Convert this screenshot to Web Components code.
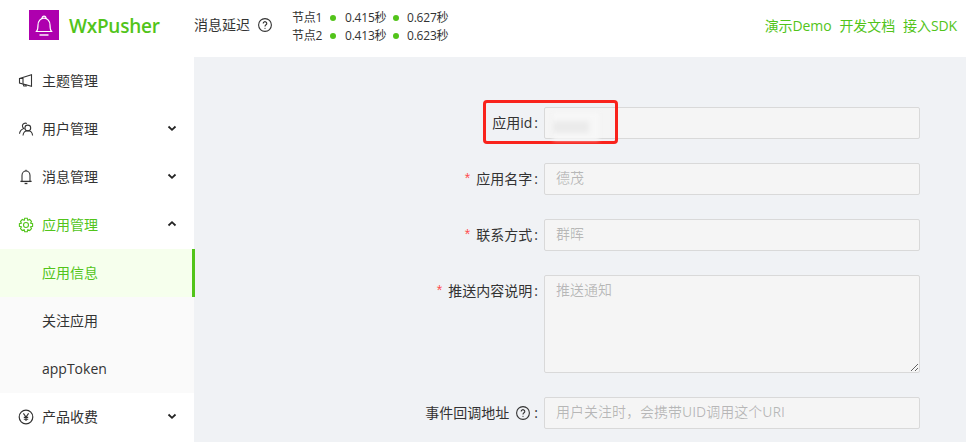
<!DOCTYPE html>
<html lang="zh">
<head>
<meta charset="utf-8">
<title>WxPusher</title>
<style>
    html, body { margin: 0; height: 100%; overflow: hidden; background: #f0f2f5; }
    body {
        font-family: "Open Sans", "Noto Sans CJK SC", sans-serif;
        font-size: 14px;
        color: rgba(0,0,0,.85);
    }
</style>
</head>
<body>
<wx-app></wx-app>

<script>
const GREEN = '#52c41a';

const ICONS = {
    notify: '<path d="M1.500 5.500 13.500 1.800v11.400L1.500 10z"/><path d="M1.500 5.500h3.500V10"/><path d="M5 10.400l.8 2.600h2.400l-.5-1.700"/>',
    user: '<circle cx="9.800" cy="7" r="2.900"/><path d="M5 14.500c.3-2.800 2.300-4.700 4.800-4.700s4.500 1.900 4.800 4.700"/><path d="M8.800 2.500A3 3 0 0 0 4.400 4.800c0 1.100.5 2 1.300 2.600C3.500 8.200 1.800 10.200 1.500 12.800"/>',
    bell: '<path d="M4 12.400V6.400a4 4.400 0 0 1 8 0v6"/><path d="M2.400 12.400h11.200" stroke-width="1.300"/><path d="M6.600 14.500h2.800" stroke-width="1.300"/><path d="M8 .8V2"/>',
    gear: '<path d="M6.700 1.300h2.600l.5 2 1.900-.8 1.800 1.800-.9 1.800 2 .6v2.600l-2 .6.9 1.800-1.800 1.800-1.900-.8-.5 2H6.700l-.5-2-1.900.8-1.800-1.800.9-1.800-2-.6V6.700l2-.6-.9-1.800 1.800-1.800 1.900.8z"/><circle cx="8" cy="8" r="2.500"/>',
    yuan: '<circle cx="8" cy="8" r="6.800" stroke-width="1.200"/><path d="M5.400 4.400 8 8l2.600-3.600M8 8v4M5.800 8.400h4.400M5.800 10.200h4.400"/>'
};

class WxHelpIcon extends HTMLElement {
    constructor() {
        super();
        this.attachShadow({ mode: 'open' });
        this.shadowRoot.innerHTML = `
            <style>
                :host { display: inline-flex; width: 14px; height: 14px; }
                svg { width: 14px; height: 14px; }
            </style>
            <svg viewBox="0 0 14 14" fill="none" stroke="#333" aria-hidden="true">
                <circle cx="7" cy="7" r="6.400" stroke-width="1.100"/>
                <path d="M5.200 5.400a1.800 1.700 0 1 1 2.800 1.400c-.7.500-1 .8-1 1.600" stroke-width="1.100"/>
                <circle cx="7" cy="10.300" r=".6" fill="#333" stroke="none"/>
            </svg>`;
    }
}

class WxLogo extends HTMLElement {
    constructor() {
        super();
        this.attachShadow({ mode: 'open' });
        this.shadowRoot.innerHTML = `
            <style>
                :host { display: flex; align-items: center; gap: 10px; }
                .mark { width: 30px; height: 30px; background: #ae00ae; display: block; }
                .name { font-size: 19px; font-weight: 600; letter-spacing: -.25px; color: ${GREEN}; line-height: 30px; width: 90px; white-space: nowrap; margin-top: 2px; }
            </style>
            <svg class="mark" viewBox="0 0 30 30" fill="none" stroke="#fff" stroke-width="1.200">
                <path d="M7.500 21.500c1.300-1.500 1.500-3 1.500-6.500 0-3.800 2.600-6.800 6-6.800s6 3 6 6.800c0 3.500.2 5 1.500 6.500z"/>
                <path d="M13 8.500c0-3.300 4-3.300 4 0"/>
                <path d="M10.500 25h9" stroke-width="1.400"/>
            </svg>
            <span class="name">WxPusher</span>`;
    }
}

class WxDelay extends HTMLElement {
    constructor() {
        super();
        this.attachShadow({ mode: 'open' });
        const rows = [['节点1', '0.415秒', '0.627秒'], ['节点2', '0.413秒', '0.623秒']];
        this.shadowRoot.innerHTML = `
            <style>
                :host { display: flex; align-items: center; color: #333; }
                .title { font-size: 14px; margin-right: 8px; padding-bottom: 2px; white-space: nowrap; }
                .nodes { margin: 4px 0 0 20px; display: grid; grid-template-columns: 29px 24px 40px 22px auto; font-size: 12px; line-height: 18px; white-space: nowrap; letter-spacing: -.2px; }
                .dot { width: 6px; height: 6px; border-radius: 50%; background: ${GREEN}; margin-top: 6px; justify-self: center; }
            </style>
            <span class="title">消息延迟</span>
            <wx-help-icon></wx-help-icon>
            <div class="nodes">
                ${rows.map(r => `<span>${r[0]}</span><i class="dot"></i><span>${r[1]}</span><i class="dot"></i><span>${r[2]}</span>`).join('')}
            </div>`;
    }
}

class WxHeader extends HTMLElement {
    constructor() {
        super();
        this.attachShadow({ mode: 'open' });
        this.shadowRoot.innerHTML = `
            <style>
                :host { display: flex; align-items: center; height: 57px; padding: 0 9px 7px 29px; box-sizing: border-box; background: #fff; }
                wx-logo { margin-right: 35px; }
                nav { margin-left: auto; display: flex; gap: 8px; color: ${GREEN}; font-size: 14px; white-space: nowrap; letter-spacing: -.1px; }
            </style>
            <wx-logo></wx-logo>
            <wx-delay></wx-delay>
            <nav><span>演示Demo</span><span>开发文档</span><span>接入SDK</span></nav>`;
    }
}

class WxMenuItem extends HTMLElement {
    constructor() {
        super();
        this.attachShadow({ mode: 'open' });
        const icon = this.getAttribute('icon');
        const arrow = this.getAttribute('arrow');
        this.shadowRoot.innerHTML = `
            <style>
                :host { display: flex; align-items: center; height: 48px; padding: 0 16px 0 18px; box-sizing: border-box; position: relative; color: #333; white-space: nowrap; }
                :host([open]) { color: ${GREEN}; }
                :host([sub]) { padding-left: 42px; background: #fafafa; }
                :host([selected]) { background: #f6ffed; color: ${GREEN}; }
                :host([selected])::after { content: ""; position: absolute; right: -1px; top: 0; bottom: 0; width: 3px; background: ${GREEN}; }
                .label { padding-bottom: 2px; }
                .icon { width: 16px; height: 16px; margin-right: 8px; flex: none; fill: none; stroke: currentColor; stroke-width: 1.100; }
                :host(:not([open])) .icon { stroke: #333; }
                .arrow { margin-left: auto; width: 12px; height: 12px; fill: none; stroke: #222; stroke-width: 1.800; margin-bottom: 2px; }
            </style>
            ${icon ? `<svg class="icon" viewBox="0 0 16 16">${ICONS[icon]}</svg>` : ''}
            <span class="label"><slot></slot></span>
            ${arrow ? `<svg class="arrow" viewBox="0 0 12 12"><path d="${arrow === 'up' ? 'M2.500 7.500 6 4.200l3.500 3.300' : 'M2.500 4.500 6 7.800l3.500-3.300'}"/></svg>` : ''}`;
    }
}

class WxSidebar extends HTMLElement {
    constructor() {
        super();
        this.attachShadow({ mode: 'open' });
        this.shadowRoot.innerHTML = `
            <style>
                :host { display: block; width: 194px; flex: none; background: #fff; position: relative; z-index: 1; }
            </style>
            <wx-menu-item icon="notify">主题管理</wx-menu-item>
            <wx-menu-item icon="user" arrow="down">用户管理</wx-menu-item>
            <wx-menu-item icon="bell" arrow="down">消息管理</wx-menu-item>
            <wx-menu-item icon="gear" arrow="up" open>应用管理</wx-menu-item>
            <wx-menu-item sub selected>应用信息</wx-menu-item>
            <wx-menu-item sub>关注应用</wx-menu-item>
            <wx-menu-item sub>appToken</wx-menu-item>
            <wx-menu-item icon="yuan" arrow="down">产品收费</wx-menu-item>`;
    }
}

class WxField extends HTMLElement {
    constructor() {
        super();
        this.attachShadow({ mode: 'open' });
        const required = this.hasAttribute('required');
        const help = this.hasAttribute('help');
        const multi = this.hasAttribute('multiline');
        const muted = this.getAttribute('value') || '';
        this.shadowRoot.innerHTML = `
            <style>
                :host { display: grid; grid-template-columns: 350px 376px; margin-bottom: 24px; }
                label { display: flex; justify-content: flex-end; align-items: center; height: 32px; padding: 0 6px 2px 0; box-sizing: border-box; color: #333; white-space: nowrap; }
                .req { color: #ff4d4f; margin-right: 6px; font-family: "Liberation Sans", sans-serif; }
                wx-help-icon { margin: 2px 2px 0 7px; }
                .colon { margin-left: 2px; }
                .box { height: 32px; box-sizing: border-box; padding: 3px 11px 5px; line-height: 22px; background: #f5f5f5; border: 1px solid #d9d9d9; border-radius: 2px; color: rgba(0,0,0,.25); white-space: nowrap; overflow: hidden; position: relative; }
                .box.multi { height: 98px; resize: vertical; overflow: auto; white-space: normal; }
            </style>
            <label>${required ? '<span class="req">*</span>' : ''}<slot></slot>${help ? '<wx-help-icon></wx-help-icon>' : ''}<span class="colon">:</span></label>
            <div class="box ${multi ? 'multi' : ''}">${muted}</div>`;
    }
}

class WxMark extends HTMLElement {
    constructor() {
        super();
        this.attachShadow({ mode: 'open' });
        this.shadowRoot.innerHTML = `
            <style>
                /* the hand drawn annotation box and the smudge sit over the first row */
                :host { position: absolute; left: 289px; top: 43px; width: 135px; height: 44px; box-sizing: border-box; border: 3px solid #f9231c; border-radius: 4px; pointer-events: none; }
                .smudge { position: absolute; left: 67px; top: 10px; width: 46px; height: 27px; background: #f7f7f7; filter: blur(2px); }
                .smudge::after { content: ""; position: absolute; left: 0; top: 8px; width: 36px; height: 12px; background: #ebebeb; filter: blur(1.500px); }
            </style>
            <div class="smudge"></div>`;
    }
}

class WxForm extends HTMLElement {
    constructor() {
        super();
        this.attachShadow({ mode: 'open' });
        this.shadowRoot.innerHTML = `
            <style>
                :host { display: block; flex: 1; min-width: 0; padding-top: 50px; position: relative; background: #f0f2f5; }
            </style>
            <wx-field>应用id</wx-field>
            <wx-field required value="德茂">应用名字</wx-field>
            <wx-field required value="群晖">联系方式</wx-field>
            <wx-field required multiline value="推送通知">推送内容说明</wx-field>
            <wx-field help value="用户关注时，会携带UID调用这个URI">事件回调地址</wx-field>
            <wx-mark></wx-mark>`;
    }
}

class WxApp extends HTMLElement {
    constructor() {
        super();
        this.attachShadow({ mode: 'open' });
        this.shadowRoot.innerHTML = `
            <style>
                :host { display: flex; flex-direction: column; height: 442px; overflow: hidden; }
                .body { display: flex; flex: 1; min-height: 0; }
            </style>
            <wx-header></wx-header>
            <div class="body">
                <wx-sidebar></wx-sidebar>
                <wx-form></wx-form>
            </div>`;
    }
}

customElements.define('wx-help-icon', WxHelpIcon);
customElements.define('wx-logo', WxLogo);
customElements.define('wx-delay', WxDelay);
customElements.define('wx-header', WxHeader);
customElements.define('wx-menu-item', WxMenuItem);
customElements.define('wx-sidebar', WxSidebar);
customElements.define('wx-field', WxField);
customElements.define('wx-mark', WxMark);
customElements.define('wx-form', WxForm);
customElements.define('wx-app', WxApp);
</script>
</body>
</html>
